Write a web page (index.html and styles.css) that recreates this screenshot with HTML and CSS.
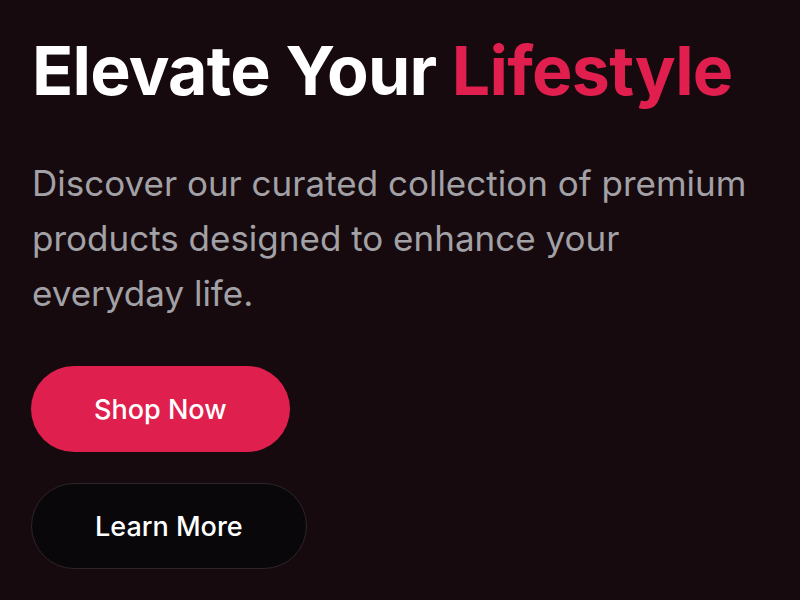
FILE: index.html
```html
<!DOCTYPE html>
<html lang="en">
<head>
<meta charset="utf-8">
<title>Elevate Your Lifestyle</title>
<link rel="stylesheet" href="styles.css">
</head>
<body>
<main class="hero">
  <h1 class="title">Elevate Your <span class="accent">Lifestyle</span></h1>
  <p class="lead">Discover our curated collection of premium products designed to enhance your everyday life.</p>
  <div class="actions">
    <a class="btn btn-primary" href="#">Shop Now</a>
    <a class="btn btn-secondary" href="#">Learn More</a>
  </div>
</main>
</body>
</html>
```

FILE: styles.css
```css
html, body {
  margin: 0;
  padding: 0;
  background: #160a0e;
  height: 100%;
  overflow: hidden;
}
body {
  font-family: Inter, "Noto Sans", sans-serif;
}
.hero {
  padding: 28px 32px 0 32px;
  display: flex;
  flex-direction: column;
  align-items: flex-start;
}
.title {
  margin: 0;
  font-size: 68px;
  font-weight: 700;
  line-height: 84px;
  color: #ffffff;
  letter-spacing: -0.75px;
}
.accent {
  color: #e01f4e;
}
.lead {
  margin: 44px 0 0 0;
  font-size: 35px;
  line-height: 55px;
  color: #a2a1a6;
  max-width: 716px;
}
.actions {
  margin-top: 45px;
  margin-left: -1px;
  display: flex;
  flex-direction: column;
  align-items: flex-start;
  gap: 31px;
}
.btn {
  display: inline-flex;
  align-items: center;
  justify-content: center;
  height: 86px;
  box-sizing: border-box;
  padding: 0 63px;
  border-radius: 43px;
  font-size: 27px;
  font-weight: 500;
  text-decoration: none;
  color: #ffffff;
}
.btn-primary {
  background: #df1f4d;
}
.btn-secondary {
  background: #09070a;
  border: 1px solid #2e2529;
}
```
